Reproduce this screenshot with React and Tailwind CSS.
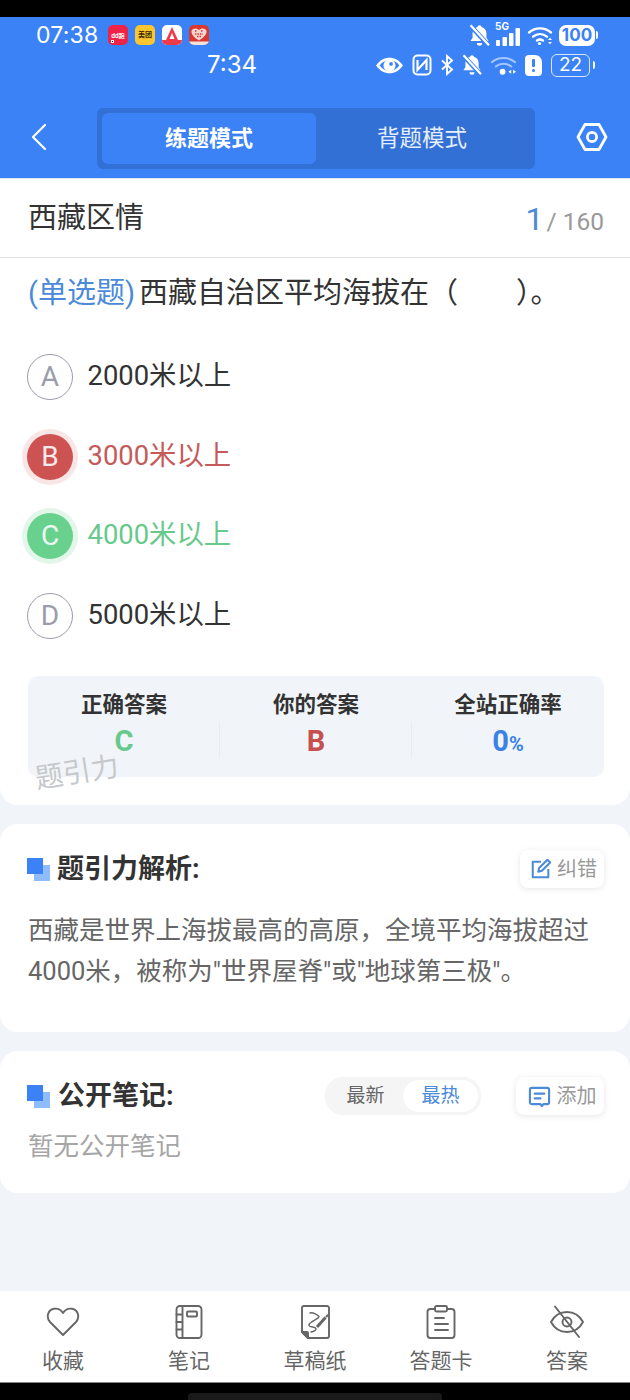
import React from "react";

const font = { fontFamily: '"Roboto","Noto Sans CJK SC",sans-serif' };
const statusFont = { fontFamily: '"Inter","Noto Sans CJK SC",sans-serif' };

function Bell({ className = "w-[22px] h-[22px]" }) {
  return (
    <svg viewBox="2 1.500 20 21.500" className={className} fill="white">
      <path d="M12 2.500a2 2 0 0 1 2 1.600c3 .8 4.600 3.200 4.600 6.200v4.200l2 3H3.400l2-3v-4.200c0-3 1.600-5.400 4.600-6.200a2 2 0 0 1 2-1.600zM9.500 19.500h5a2.500 2.500 0 0 1-5 0z" />
      <path d="M3 2.500 21 22" stroke="#3b82f6" strokeWidth="4.500" />
      <path d="M3.500 2.500 21 21.500" stroke="white" strokeWidth="2.200" />
    </svg>
  );
}

function Wifi({ className }) {
  return (
    <svg viewBox="0 0 26 20" className={className} fill="none" stroke="white" strokeWidth="2.300" strokeLinecap="round">
      <path d="M2 7c6.400-5.400 15.600-5.400 22 0" />
      <path d="M6 11.200c4.200-3.400 9.800-3.400 14 0" />
      <path d="M10 15c1.900-1.300 4.100-1.300 6 0" />
      <circle cx="12.500" cy="18" r="1.600" fill="white" stroke="none" />
      <path d="M21 14.500l2-2.200 2 2.200zM21 16.500l2 2.200 2-2.200z" fill="white" stroke="none" />
    </svg>
  );
}

function Status() {
  return (
    <div className="bg-[#3b82f6] h-[90px] pt-[3px] text-white" style={statusFont}>
      <div className="flex items-center h-[30px] pl-[36px] pr-[35px]">
        <span className="text-[23px] leading-[30px] w-[70px] tracking-[0.2px]">07:38</span>
        <div className="flex ml-[2px] gap-[7px]">
          <div className="relative w-[20px] h-[20px] rounded-[5px] bg-[#ee2347] flex items-center justify-center text-[6px] font-bold">
            dd跑
            <div className="absolute left-[3px] bottom-[2px] w-[3px] h-[3px] bg-black border-[0.5px] border-white" />
          </div>
          <div className="w-[20px] h-[20px] rounded-[5px] bg-[#fcc630] flex items-center justify-center text-[7px] font-bold text-[#3a2c00]">美团</div>
          <div className="w-[20px] h-[20px] rounded-[5px] bg-white overflow-hidden">
            <svg viewBox="0 0 20 20" className="w-[20px] h-[20px]">
              <path d="M10 2 16 15H4z" fill="#ee3a4b" />
              <path d="M10 8 12.500 14H7.500z" fill="#fff" />
              <rect y="15" width="20" height="5" fill="#ee3a4b" />
            </svg>
          </div>
          <div className="w-[20px] h-[20px] rounded-[5px] bg-[#d9382f] overflow-hidden">
            <svg viewBox="0 0 20 20" className="w-[20px] h-[20px]">
              <path d="M10 15.500C5 12.500 2 9 2.500 6c.5-3 5.500-3.500 7.500-1 2-2.500 7-2 7.500 1 .5 3-2.500 6.500-7.500 9.500z" fill="#f9d5cf" />
              <path d="M6 6h2M12 6h2M6 9h8M8 11.500h4" stroke="#d9382f" strokeWidth="1.300" strokeDasharray="1.500 1" />
              <rect y="16.500" width="20" height="3.500" fill="#f3e3dc" />
            </svg>
          </div>
        </div>
        <div className="flex-1" />
        <Bell className="w-[21px] h-[23px]" />
        <div className="relative w-[26px] h-[26px] ml-[5px]">
          <span className="absolute left-[0px] top-[-2px] text-[10px] font-bold leading-[12px]">5G</span>
          <svg viewBox="0 0 26 26" className="w-[26px] h-[26px]" fill="white">
            <rect x="1" y="18" width="4" height="6" rx="1" />
            <rect x="7.500" y="15" width="4.500" height="9" rx="1" />
            <rect x="14" y="11" width="4.500" height="13" rx="1" />
            <rect x="20.500" y="6" width="4.500" height="18" rx="1" />
          </svg>
        </div>
        <Wifi className="w-[26px] h-[21px] ml-[6px]" />
        <div className="relative ml-[6px] w-[36px] h-[21px] rounded-[7px] bg-white flex items-center justify-center">
          <span className="text-[#3b82f6] text-[17px] font-bold leading-[20px]">100</span>
          <div className="absolute right-[-3px] top-[6px] w-[2px] h-[8px] rounded-r-[2px] bg-white" />
        </div>
      </div>
      <div className="flex items-center h-[30px] pr-[40px]">
        <span className="ml-[207px] text-[24px] leading-[30px]">7:34</span>
        <div className="flex-1" />
        <svg viewBox="0 0 28 20" className="w-[29px] h-[21px]" fill="none">
          <path d="M1 10C5 4.500 9 2.500 14 2.500S23 4.500 27 10C23 15.500 19 17.500 14 17.500S5 15.500 1 10z" fill="white" />
          <path d="M4.500 10C7 6.500 10 5 14 5s7 1.500 9.500 5c-2.500 3.500-5.500 5-9.500 5s-7-1.500-9.500-5z" fill="#3b82f6" />
          <circle cx="14" cy="10" r="5.800" fill="white" />
          <circle cx="15.500" cy="8.500" r="1.800" fill="#3b82f6" />
        </svg>
        <svg viewBox="0 0 20 22" className="w-[20px] h-[22px] ml-[8px]" fill="none" stroke="white" strokeWidth="2">
          <rect x="1.500" y="1.500" width="17" height="19" rx="4" />
          <path d="M5.500 6v10l9-10v10" strokeWidth="2.200" />
        </svg>
        <svg viewBox="0 0 14 22" className="w-[14px] h-[22px] ml-[8px]" fill="none" stroke="white" strokeWidth="1.900">
          <path d="M2 6.500 12 15.500 7 20V2l5 4.500L2 15.500" />
        </svg>
        <Bell className="w-[20px] h-[22px] ml-[8px]" />
        <svg viewBox="0 0 28 22" className="w-[27px] h-[22px] ml-[8px]" fill="none" stroke="white" strokeLinecap="round" strokeWidth="2.200">
          <path d="M2 8c6.500-5.600 17.500-5.600 24 0" strokeOpacity=".55" />
          <path d="M6 12.500c4.500-3.800 11.500-3.800 16 0" strokeOpacity=".55" />
          <circle cx="13" cy="18" r="3" fill="white" stroke="none" />
          <path d="M19 18l3-2v4zM27 18l-3-2v4z" fill="white" stroke="none" />
        </svg>
        <div className="ml-[8px] w-[17px] h-[21px] rounded-[4px] rounded-tr-[7px] bg-white flex flex-col items-center justify-center gap-[2px]">
          <div className="w-[3px] h-[8px] bg-[#3b82f6] rounded-[1px]" />
          <div className="w-[3px] h-[3px] bg-[#3b82f6] rounded-full" />
        </div>
        <div className="relative ml-[9px] w-[39px] h-[23px] rounded-[6px] border border-white/80 flex items-center justify-center">
          <span className="text-[19px] leading-[20px]">22</span>
          <div className="absolute right-[-6px] top-[6px] w-[2px] h-[8px] rounded-r-[2px] bg-white" />
        </div>
      </div>
    </div>
  );
}

function Nav() {
  return (
    <div className="bg-[#3b82f6] h-[72px] flex items-start pt-[1px] border-b border-[#dfe8f5]">
      <div className="w-[97px] pl-[30px] pt-[15px]">
        <svg viewBox="0 0 18 28" className="w-[18px] h-[28px]" fill="none" stroke="white" strokeWidth="2.200" strokeLinecap="round" strokeLinejoin="round">
          <path d="M15 2 3 14l12 12" />
        </svg>
      </div>
      <div className="w-[438px] h-[61px] rounded-[6px] bg-[#3370d6] p-[5px] flex">
        <div className="w-[214px] h-[51px] rounded-[6px] bg-[#3b82f6] flex items-center justify-center text-white text-[22px] font-bold">练题模式</div>
        <div className="flex-1 flex items-center justify-center pr-[2px] text-[#e4eeff] text-[22.500px]">背题模式</div>
      </div>
      <div className="flex-1 pl-[41px] pt-[14px]">
        <svg viewBox="0 0 32 30" className="w-[32px] h-[30px]" fill="none" stroke="white" strokeWidth="2.800" strokeLinejoin="round">
          <path d="M9 2.500h14L30 15l-7 12.500H9L2 15z" />
          <circle cx="16" cy="15" r="4.600" />
        </svg>
      </div>
    </div>
  );
}

function Option({ letter, text, state }) {
  const wrap = state === "wrong" ? "bg-[#f8e6e6]" : state === "right" ? "bg-[#e3f6ea]" : "";
  const circle =
    state === "wrong"
      ? "bg-[#cd5252] text-[#fbeaea]"
      : state === "right"
      ? "bg-[#69d18e] text-[#eafaf0]"
      : "border-[1.500px] border-[#9a9cab] text-[#9a9cab]";
  const color = state === "wrong" ? "text-[#c65a5a]" : state === "right" ? "text-[#68c98c]" : "text-[#333333]";
  return (
    <div className="flex items-center h-[56px] mb-[23.500px]">
      <div className={`w-[56px] h-[56px] rounded-full flex items-center justify-center ml-[-6px] ${wrap}`}>
        <div className={`w-[46px] h-[46px] rounded-full flex items-center justify-center text-[28px] ${circle}`}>{letter}</div>
      </div>
      <span className={`ml-[9.500px] text-[27.400px] ${color}`}>{text}</span>
    </div>
  );
}

function Stat({ title, children, divider }) {
  return (
    <div className="relative flex-1 flex flex-col items-center">
      <span className="text-[21.500px] font-bold text-[#333333] leading-[30px]">{title}</span>
      <div className="h-[44px] flex items-center">{children}</div>
      {divider && <div className="absolute right-0 top-[32px] w-[1px] h-[36px] bg-[#e9edf2]" />}
    </div>
  );
}

function Squares() {
  return (
    <div className="relative w-[23px] h-[23px] shrink-0 ml-[-1px]">
      <div className="absolute right-0 bottom-0 w-[16px] h-[16px] bg-[#8fbcfb]" />
      <div className="absolute left-0 top-0 w-[16px] h-[16px] bg-[#3b82f6]" />
    </div>
  );
}

const BarIcons = {
  heart: (
    <path d="M17 30 4 17C0 12.500 1.500 5 8 3.800c3.500-.6 7 1 9 4.200 2-3.200 5.500-4.800 9-4.200 6.500 1.200 8 8.700 4 13.200z" />
  ),
  note: (
    <>
      <rect x="4.500" y="1" width="25" height="32" rx="3.500" />
      <path d="M10.500 1v32M4.500 9.500h6M4.500 17h6M4.500 24.500h6" />
      <rect x="15" y="6.500" width="10" height="5" rx="1" />
    </>
  ),
  draft: (
    <>
      <path d="M10 33H29a2 2 0 0 0 2-2V3a2 2 0 0 0-2-2H6a2 2 0 0 0-2 2v24z" />
      <path d="M4 27h5a1 1 0 0 1 1 1v5z" fill="#666666" />
      <path d="M12 8c3-1 8 2 9 3.500 1 1.500-9 5-10 8-1 3 6 2 7 4 .5 1.500-2 3-5 3.500" strokeWidth="1.400" />
      <path d="M19 22l8.500-9.500" strokeWidth="3" strokeLinecap="butt" />
      <path d="M28.500 11.500l1-1.200" strokeWidth="2" />
    </>
  ),
  card: (
    <>
      <path d="M11 4H6.500a3 3 0 0 0-3 3v23a3 3 0 0 0 3 3h21a3 3 0 0 0 3-3V7a3 3 0 0 0-3-3H23" />
      <rect x="11" y="1" width="12" height="5.500" rx="1.500" />
      <path d="M11 13h9M11 19h13M11 25h13" />
    </>
  ),
  eye: (
    <>
      <path d="M1 17C5 9.500 10.500 7 17 7s12 2.500 16 10c-4 7.500-9.500 10-16 10S5 24.500 1 17z" />
      <circle cx="17" cy="17" r="4.500" />
      <path d="M5 1.500 29 32" />
    </>
  ),
};

function BarItem({ icon, label }) {
  return (
    <div className="flex-1 flex flex-col items-center pt-[14px]">
      <svg viewBox="0 0 34 34" className="w-[34px] h-[34px]" fill="none" stroke="#666666" strokeWidth="1.900" strokeLinejoin="round" strokeLinecap="round">
        {BarIcons[icon]}
      </svg>
      <span className="mt-[7px] text-[21px] leading-[30px] text-[#666666]">{label}</span>
    </div>
  );
}

export default function App() {
  return (
    <div className="w-[630px] h-[1400px] bg-[#f1f5f9] flex flex-col overflow-hidden" style={font}>
      <div className="bg-black h-[17px] shrink-0" />
      <Status />
      <Nav />

      <div className="bg-white h-[626px] rounded-b-[18px] shrink-0">
        <div className="h-[79px] border-b border-[#e3e3e3] pl-[28px] pr-[26px] pt-[2px] flex items-center justify-between">
          <span className="text-[29px] text-[#333333]">西藏区情</span>
          <div className="flex items-baseline text-[#999999]">
            <span className="text-[32px] text-[#4a8ad8] mr-[3px]">1</span>
            <span className="text-[24.500px]">/ 160</span>
          </div>
        </div>
        <div className="relative px-[28px]">
          <p className="text-[29px] leading-[40px] text-[#333333] pt-[15px] whitespace-pre">
            <span className="text-[#4a8ad8] mr-[4px]">(单选题)</span>西藏自治区平均海拔在（　　）。
          </p>
          <div className="pt-[36px]">
            <Option letter="A" text="2000米以上" />
            <Option letter="B" text="3000米以上" state="wrong" />
            <Option letter="C" text="4000米以上" state="right" />
            <Option letter="D" text="5000米以上" />
          </div>
          <div className="flex h-[101px] rounded-[10px] bg-[#f1f5f9] pt-[14px] mt-[32.500px] mr-[-2px]">
            <Stat title="正确答案" divider>
              <span className="text-[29px] font-bold text-[#68c98c]">C</span>
            </Stat>
            <Stat title="你的答案" divider>
              <span className="text-[29px] font-bold text-[#c65050]">B</span>
            </Stat>
            <Stat title="全站正确率">
              <span className="text-[29px] font-bold text-[#3b82e6]">0</span>
              <span className="text-[20px] font-bold text-[#3b82e6] mt-[3px]">%</span>
            </Stat>
          </div>
          <span className="absolute left-[35px] top-[499px] text-[28px] leading-[32px] text-[#c6c8cb] rotate-[-9deg]">题引力</span>
        </div>
      </div>

      <div className="bg-white h-[208px] mt-[19px] rounded-[18px] shrink-0 pl-[28px] pr-[26px] pt-[26px]">
        <div className="flex items-center h-[38px]">
          <Squares />
          <span className="ml-[7px] text-[27px] font-bold text-[#333333] flex-1">题引力解析:</span>
          <div className="w-[84px] h-[38px] rounded-[8px] bg-white shadow-[0_1px_6px_rgba(0,0,0,0.1)] flex items-center justify-center gap-[5px] pl-[3px] text-[20px] text-[#999999]">
            <svg viewBox="0 0 24 24" className="w-[22px] h-[22px]" fill="none" stroke="#4a8ad8" strokeWidth="2.200" strokeLinejoin="round">
              <path d="M12 4H3v17h17v-9" />
              <path d="M9 15l1-4 9-9 3 3-9 9z" />
            </svg>
            纠错
          </div>
        </div>
        <p className="mt-[22px] text-[25.500px] leading-[41px] text-[#666666]">
          西藏是世界上海拔最高的高原，全境平均海拔超过4000米，被称为"世界屋脊"或"地球第三极"。
        </p>
      </div>

      <div className="bg-white h-[142px] mt-[19px] rounded-[18px] shrink-0 pl-[28px] pr-[26px] pt-[26px]">
        <div className="flex items-center h-[38px]">
          <Squares />
          <span className="ml-[8px] text-[27px] font-bold text-[#333333] flex-1">公开笔记:</span>
          <div className="w-[156px] h-[38px] rounded-full bg-[#f5f5f5] p-[3px] flex text-[19px] mr-[35px] shadow-[0_0_2px_rgba(0,0,0,0.05)]">
            <div className="w-[75px] flex items-center justify-center text-[#666666]">最新</div>
            <div className="flex-1 rounded-full bg-white flex items-center justify-center text-[#4a8ad8]">最热</div>
          </div>
          <div className="w-[88px] h-[38px] rounded-[8px] bg-white shadow-[0_1px_6px_rgba(0,0,0,0.1)] flex items-center justify-center gap-[6px] pl-[4px] text-[20px] text-[#999999]">
            <svg viewBox="0 0 24 24" className="w-[23px] h-[23px]" fill="none" stroke="#4a8ad8" strokeWidth="2.200" strokeLinejoin="round" strokeLinecap="round">
              <path d="M4 3h16a2 2 0 0 1 2 2v13a2 2 0 0 1-2 2h-4l-1.500 2-1.500-2H4a2 2 0 0 1-2-2V5a2 2 0 0 1 2-2z" />
              <path d="M7 9h10M7 14h6" />
            </svg>
            添加
          </div>
        </div>
        <p className="mt-[13px] text-[25.500px] leading-[36px] text-[#a6a6a6]">暂无公开笔记</p>
      </div>

      <div className="flex-1" />

      <div className="bg-white h-[91px] shrink-0 flex">
        <BarItem icon="heart" label="收藏" />
        <BarItem icon="note" label="笔记" />
        <BarItem icon="draft" label="草稿纸" />
        <BarItem icon="card" label="答题卡" />
        <BarItem icon="eye" label="答案" />
      </div>
      <div className="bg-black h-[18px] shrink-0 border-t border-[#888888] flex justify-center pt-[10px]">
        <div className="w-[254px] h-[8px] rounded-t-[4px] bg-[#1a1a1a]" />
      </div>
    </div>
  );
}
